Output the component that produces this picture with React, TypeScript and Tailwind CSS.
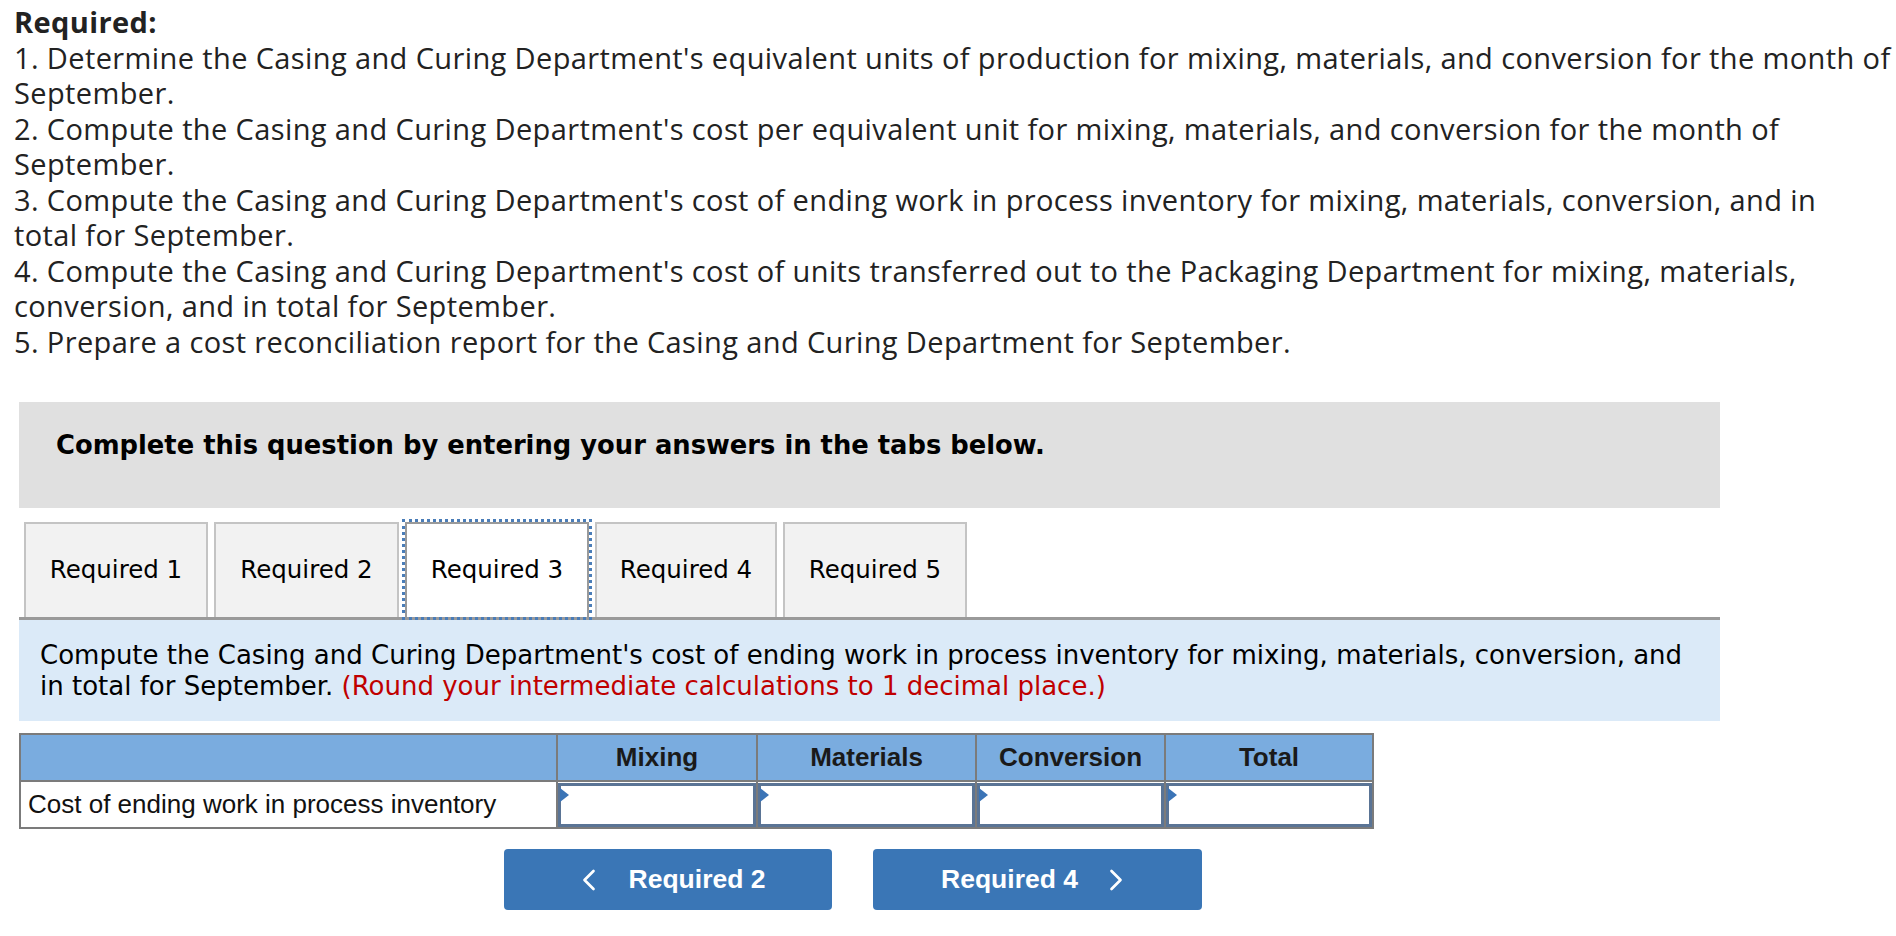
import { ChevronLeft, ChevronRight } from "lucide-react";

// each item is split where the original wraps it
const items = [
  [
    "1. Determine the Casing and Curing Department's equivalent units of production for mixing, materials, and conversion for the month of",
    "September.",
  ],
  [
    "2. Compute the Casing and Curing Department's cost per equivalent unit for mixing, materials, and conversion for the month of",
    "September.",
  ],
  [
    "3. Compute the Casing and Curing Department's cost of ending work in process inventory for mixing, materials, conversion, and in",
    "total for September.",
  ],
  [
    "4. Compute the Casing and Curing Department's cost of units transferred out to the Packaging Department for mixing, materials,",
    "conversion, and in total for September.",
  ],
  ["5. Prepare a cost reconciliation report for the Casing and Curing Department for September."],
];

const tabs = [
  { label: "Required 1", w: "w-[184px]" },
  { label: "Required 2", w: "w-[185px]" },
  { label: "Required 3", w: "w-[184px]", active: true },
  { label: "Required 4", w: "w-[182px]" },
  { label: "Required 5", w: "w-[184px]" },
];

const cols = [
  { label: "Mixing", w: "w-[200px]" },
  { label: "Materials", w: "w-[219px]" },
  { label: "Conversion", w: "w-[189px]" },
  { label: "Total", w: "w-[208px]" },
];

function InputCell() {
  return (
    <td className="border-2 border-[#7b7b7b] p-0">
      <div className="relative h-[44px] border-[3px] border-[#5a7495] bg-white">
        {/* the little marker that flags an answer box */}
        <span className="absolute -left-[1px] top-[2px] h-0 w-0 border-y-[7px] border-l-[9px] border-y-transparent border-l-[#3b74b6]" />
      </div>
    </td>
  );
}

export default function App() {
  return (
    <div className="min-h-screen w-[1896px] bg-white text-[#1a1a1a]">
      <div className="pl-[14px] pt-[4px] font-['Open_Sans',sans-serif] text-[29px] leading-[35.5px] tracking-[0.38px] text-[#222]">
        <p className="font-bold">Required:</p>
        {items.map((lines) => (
          <p key={lines[0]}>
            {lines.map((l, i) => (
              <span key={l} className="whitespace-nowrap">
                {i > 0 && <br />}
                {l}
              </span>
            ))}
          </p>
        ))}
      </div>

      <div className="ml-[19px] mt-[43px] w-[1701px] font-['DejaVu_Sans',Verdana,sans-serif]">
        <div className="h-[106px] bg-[#e0e0e0] pl-[37px] pt-[28px] text-[25.8px] font-bold leading-[30px] text-black">
          Complete this question by entering your answers in the tabs below.
        </div>

        <div className="mt-[14px] flex items-end gap-[6px] pl-[5px]">
          {tabs.map((t) =>
            t.active ? (
              <div
                key={t.label}
                className={`${t.w} relative z-10 flex h-[95px] items-center justify-center border-2 border-b-0 border-[#9a9a9a] bg-white text-[24.5px] text-black outline-[3px] outline-dotted outline-[#4a7db8]`}
              >
                {t.label}
              </div>
            ) : (
              <div
                key={t.label}
                className={`${t.w} flex h-[95px] items-center justify-center border-2 border-b-0 border-[#c4c4c4] bg-[#f2f2f2] text-[24.5px] text-black`}
              >
                {t.label}
              </div>
            )
          )}
        </div>

        <div className="border-t-[3px] border-[#9a9a9a] bg-[#dbeaf8] px-[21px] pb-[19px] pt-[20px] text-[26px] leading-[31px] text-black">
          Compute the Casing and Curing Department's cost of ending work in process inventory for mixing, materials, conversion, and in total for September.{" "}
          <span className="text-[#c00000]">(Round your intermediate calculations to 1 decimal place.)</span>
        </div>
      </div>

      <table className="ml-[19px] mt-[12px] border-collapse border-2 border-[#7b7b7b] font-['Liberation_Sans',Arial,sans-serif] text-[26px]">
        <thead>
          <tr className="h-[47px] bg-[#7aacdf]">
            <th className="w-[537px] border-2 border-[#7b7b7b]" />
            {cols.map((c) => (
              <th key={c.label} className={`${c.w} border-2 border-[#7b7b7b] text-center font-bold text-[#1a1a1a]`}>
                {c.label}
              </th>
            ))}
          </tr>
        </thead>
        <tbody>
          <tr className="h-[47px]">
            <td className="border-2 border-[#7b7b7b] px-[7px] text-left text-[#111]">
              Cost of ending work in process inventory
            </td>
            <InputCell />
            <InputCell />
            <InputCell />
            <InputCell />
          </tr>
        </tbody>
      </table>

      <div className="ml-[504px] mt-[20px] flex gap-[41px] font-['Liberation_Sans',Arial,sans-serif] text-[26.5px] font-bold text-white">
        <button
          type="button"
          className="flex h-[61px] w-[328px] items-center justify-center gap-[22px] rounded-[4px] bg-[#3a76b6]"
        >
          <ChevronLeft className="h-[36px] w-[36px]" strokeWidth={1.8} />
          <span>Required 2</span>
        </button>
        <button
          type="button"
          className="flex h-[61px] w-[329px] items-center justify-center gap-[20px] rounded-[4px] bg-[#3a76b6]"
        >
          <span>Required 4</span>
          <ChevronRight className="h-[36px] w-[36px]" strokeWidth={1.8} />
        </button>
      </div>
    </div>
  );
}
